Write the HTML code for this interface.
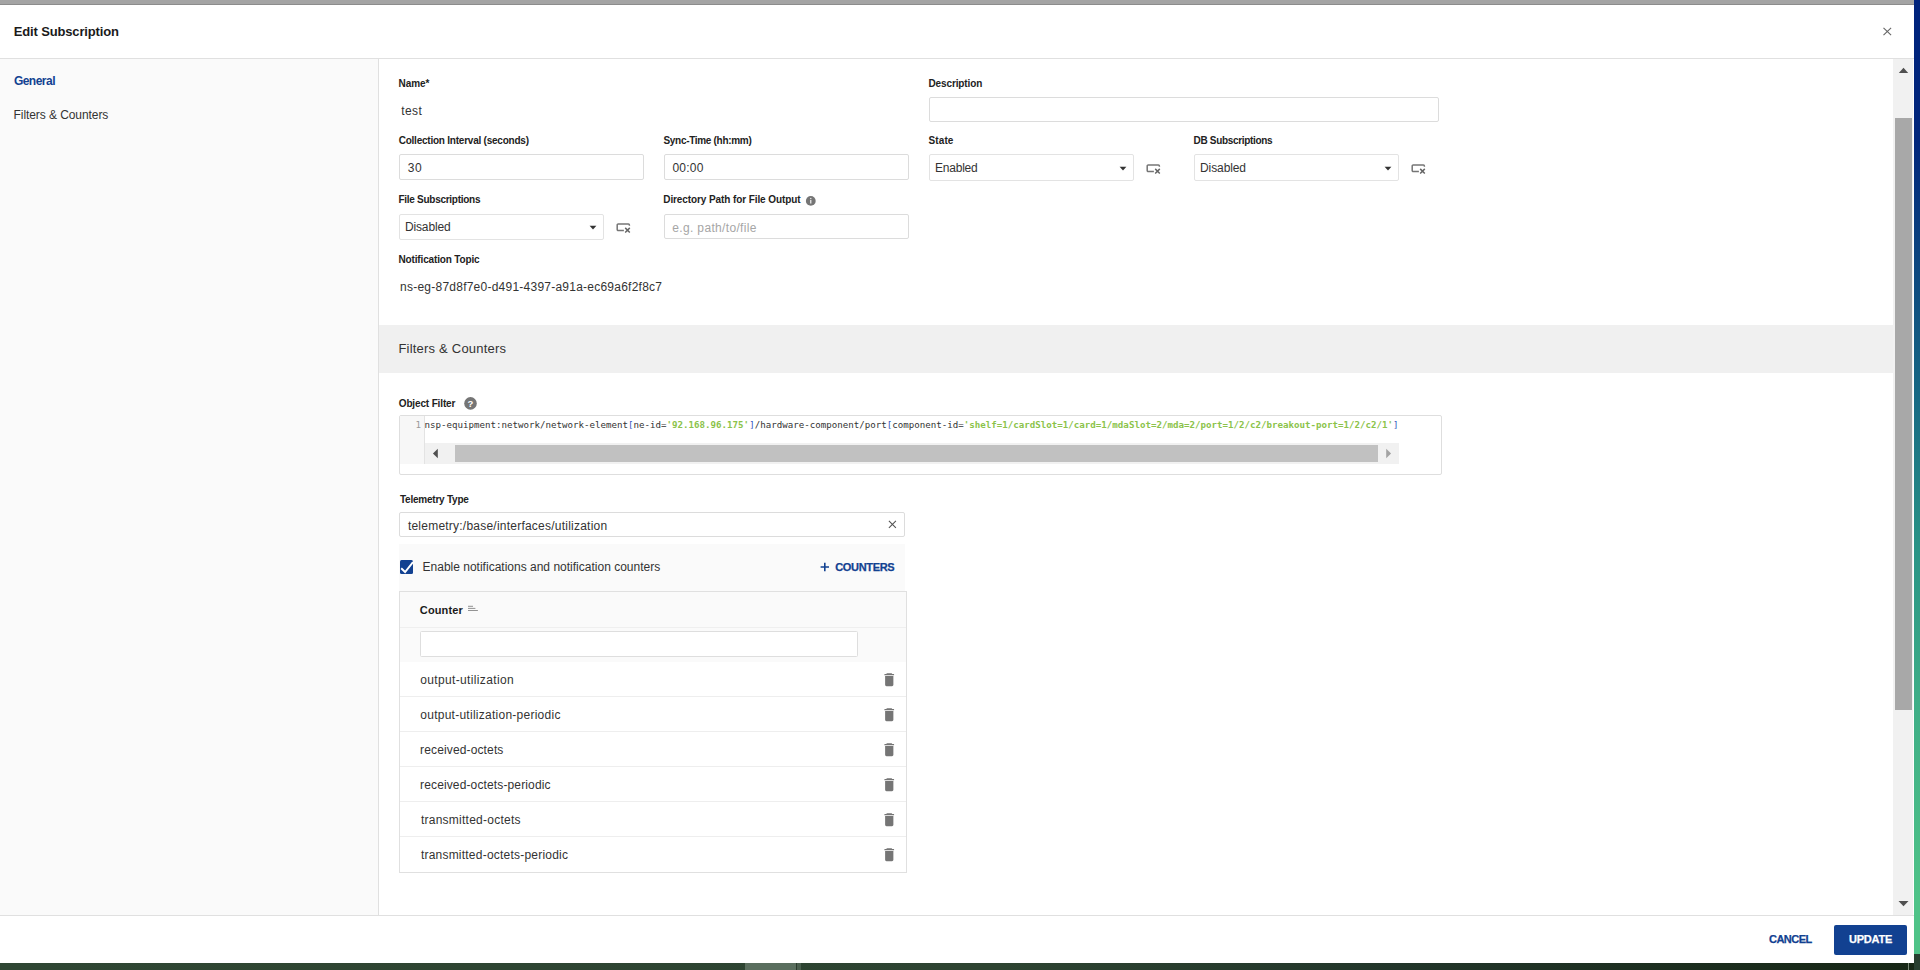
<!DOCTYPE html>
<html lang="en">
<head>
<meta charset="utf-8">
<title>Edit Subscription</title>
<style>
*{box-sizing:border-box;margin:0;padding:0}
html,body{width:1920px;height:970px;overflow:hidden}
body{position:relative;background:#2f4633;font-family:"Liberation Sans",sans-serif;color:#333;font-size:12px}
.abs{position:absolute}
.t{position:absolute;white-space:nowrap;line-height:1}
#topstrip{left:0;top:0;width:1914px;height:5px;background:#a4a4a4;border-bottom:1px solid #8c8c8c}
#rightstrip{left:1914px;top:0;width:6px;height:954px;background:linear-gradient(to bottom,#00237c 0px,#01267c 140px,#0c437f 250px,#186a84 400px,#2a9486 550px,#3fae87 700px,#4fc388 900px,#4fc388 954px)}
#rightbot{left:1914px;top:954px;width:6px;height:16px;background:#283f30}
#botstrip{left:0;top:963px;width:1914px;height:7px;background:linear-gradient(to right,#2f4633 0px,#2d4331 1000px,#22352a 1400px,#172716 1900px)}
#dialog{left:0;top:5px;width:1914px;height:958px;background:#fff}
#hline{left:0;top:58px;width:1914px;height:1px;background:#e0e0e0}
#side{left:0;top:59px;width:378px;height:856px;background:#fafafa}
#sideline{left:378px;top:59px;width:1px;height:856px;background:#e0e0e0}
#fline{left:0;top:915px;width:1914px;height:1px;background:#e0e0e0}
.lbl{font-weight:bold;font-size:11px;color:#222}
.inp{position:absolute;border:1px solid #dcdcdc;border-radius:2px;background:#fff}
.sel{border-color:#e3e3e3}
.val{font-size:12px;color:#333}
.br{color:#3355c0}
.st{color:#8bc34a;font-weight:bold}
</style>
</head>
<body>
<div class="abs" id="topstrip"></div>
<div class="abs" id="rightstrip"></div>
<div class="abs" id="botstrip"></div>
<div class="abs" id="rightbot"></div>
<div class="abs" style="left:1908px;top:963px;width:1px;height:7px;background:#7a8a78"></div>
<div class="abs" id="dialog"></div>
<div class="abs" id="hline"></div>
<div class="abs" id="side"></div>
<div class="abs" id="sideline"></div>
<div class="abs" id="fline"></div>
<!-- header -->
<div class="t" id="title" style="left:13.78px;top:25px;font-size:13px;font-weight:bold;color:#1a1a1a;letter-spacing:-0.155px">Edit Subscription</div>
<svg class="abs" id="closex" style="left:1882px;top:26px" width="11" height="11" viewBox="0 0 11 11"><path d="M1.5 1.8 L9.1 9.2 M9.1 1.8 L1.5 9.2" stroke="#666" stroke-width="1.1" fill="none"/></svg>
<!-- sidebar -->
<div class="t" id="navgen" style="left:13.88px;top:75px;font-size:12px;font-weight:bold;color:#124191;letter-spacing:-0.514px">General</div>
<div class="t" id="navfil" style="left:13.54px;top:109px;font-size:12px;color:#333;letter-spacing:-0.074px">Filters &amp; Counters</div>
<!-- main scrollbar -->
<div class="abs" id="vtrack" style="left:1893px;top:59px;width:20px;height:856px;background:#f1f1f1"></div>
<div class="abs" id="vthumb" style="left:1895px;top:118px;width:17px;height:592px;background:#a8a8a8"></div>
<svg class="abs" style="left:1898px;top:67px" width="11" height="7" viewBox="0 0 11 7"><path d="M0.8 6 L5.5 0.8 L10.2 6 Z" fill="#505050"/></svg>
<svg class="abs" style="left:1898px;top:900px" width="11" height="7" viewBox="0 0 11 7"><path d="M0.5 1 L5.5 6.3 L10.5 1 Z" fill="#505050"/></svg>
<!-- general form -->
<div class="t lbl" id="l_name" style="left:398.47px;top:79px;font-size:10px;letter-spacing:-0.022px">Name*</div>
<div class="t val" id="v_name" style="left:401.18px;top:105px;font-size:12px;letter-spacing:0.454px">test</div>
<div class="t lbl" id="l_desc" style="left:928.47px;top:79px;font-size:10px;letter-spacing:-0.121px">Description</div>
<div class="inp" id="i_desc" style="left:929px;top:97px;width:510px;height:25px"></div>

<div class="t lbl" id="l_ci" style="left:398.69px;top:136px;font-size:10px;letter-spacing:-0.228px">Collection Interval (seconds)</div>
<div class="inp" id="i_ci" style="left:399px;top:154px;width:245px;height:26px"></div>
<div class="t val" id="v_ci" style="left:407.65px;top:162px;font-size:12px;letter-spacing:0.625px">30</div>
<div class="t lbl" id="l_sync" style="left:663.47px;top:136px;font-size:10px;letter-spacing:-0.305px">Sync-Time (hh:mm)</div>
<div class="inp" id="i_sync" style="left:664px;top:154px;width:245px;height:26px"></div>
<div class="t val" id="v_sync" style="left:672.44px;top:162px;font-size:12px;letter-spacing:0.245px">00:00</div>
<div class="t lbl" id="l_state" style="left:928.62px;top:136px;font-size:10px;letter-spacing:0.084px">State</div>
<div class="inp sel" id="i_state" style="left:929px;top:154px;width:205px;height:27px"></div>
<div class="t val" id="v_state" style="left:934.91px;top:162px;font-size:12px;letter-spacing:-0.196px">Enabled</div>
<svg class="abs" style="left:1119px;top:166px" width="8" height="5" viewBox="0 0 8 5"><path d="M0.6 0.8 L7.4 0.8 L4 4.5 Z" fill="#333"/></svg>
<svg class="abs ico" style="left:1146px;top:163px" width="15" height="12" viewBox="0 0 15 12"><path d="M13.4 3.7 V2.9 a1 1 0 0 0 -1 -1 H2.2 a1 1 0 0 0 -1 1 V7.6 a1 1 0 0 0 1 1 H7.9" stroke="#757575" stroke-width="1.5" fill="none"/><path d="M9.2 5.9 L13.8 10.5 M13.8 5.9 L9.2 10.5" stroke="#666" stroke-width="1.5" fill="none"/></svg>
<div class="t lbl" id="l_db" style="left:1193.61px;top:136px;font-size:10px;letter-spacing:-0.333px">DB Subscriptions</div>
<div class="inp sel" id="i_db" style="left:1194px;top:154px;width:205px;height:27px"></div>
<div class="t val" id="v_db" style="left:1200.07px;top:162px;font-size:12px;letter-spacing:-0.105px">Disabled</div>
<svg class="abs" style="left:1384px;top:166px" width="8" height="5" viewBox="0 0 8 5"><path d="M0.6 0.8 L7.4 0.8 L4 4.5 Z" fill="#333"/></svg>
<svg class="abs ico" style="left:1411px;top:163px" width="15" height="12" viewBox="0 0 15 12"><path d="M13.4 3.7 V2.9 a1 1 0 0 0 -1 -1 H2.2 a1 1 0 0 0 -1 1 V7.6 a1 1 0 0 0 1 1 H7.9" stroke="#757575" stroke-width="1.5" fill="none"/><path d="M9.2 5.9 L13.8 10.5 M13.8 5.9 L9.2 10.5" stroke="#666" stroke-width="1.5" fill="none"/></svg>

<div class="t lbl" id="l_fs" style="left:398.47px;top:195px;font-size:10px;letter-spacing:-0.277px">File Subscriptions</div>
<div class="inp sel" id="i_fs" style="left:399px;top:214px;width:205px;height:26px"></div>
<div class="t val" id="v_fs" style="left:404.88px;top:221px;font-size:12px;letter-spacing:-0.122px">Disabled</div>
<svg class="abs" style="left:589px;top:225px" width="8" height="5" viewBox="0 0 8 5"><path d="M0.6 0.8 L7.4 0.8 L4 4.5 Z" fill="#333"/></svg>
<svg class="abs ico" style="left:616px;top:222px" width="15" height="12" viewBox="0 0 15 12"><path d="M13.4 3.7 V2.9 a1 1 0 0 0 -1 -1 H2.2 a1 1 0 0 0 -1 1 V7.6 a1 1 0 0 0 1 1 H7.9" stroke="#757575" stroke-width="1.5" fill="none"/><path d="M9.2 5.9 L13.8 10.5 M13.8 5.9 L9.2 10.5" stroke="#666" stroke-width="1.5" fill="none"/></svg>
<div class="t lbl" id="l_dir" style="left:663.26px;top:195px;font-size:10px;letter-spacing:-0.094px">Directory Path for File Output</div>
<svg class="abs" style="left:805px;top:195px" width="12" height="12" viewBox="0 0 12 12"><circle cx="5.8" cy="5.9" r="4.9" fill="#757575"/><rect x="5.25" y="4.9" width="1.1" height="3.6" fill="#fff"/><rect x="5.25" y="2.9" width="1.1" height="1.2" fill="#fff"/></svg>
<div class="inp" id="i_dir" style="left:664px;top:214px;width:245px;height:25px"></div>
<div class="t val" id="v_dir" style="left:672.36px;top:222px;color:#a6a6a6;font-size:12px;letter-spacing:0.333px">e.g. path/to/file</div>

<div class="t lbl" id="l_nt" style="left:398.47px;top:255px;font-size:10px;letter-spacing:-0.148px">Notification Topic</div>
<div class="t val" id="v_nt" style="left:400.07px;top:281px;font-size:12px;letter-spacing:0.237px">ns-eg-87d8f7e0-d491-4397-a91a-ec69a6f2f8c7</div>

<!-- section header -->
<div class="abs" id="sechdr" style="left:379px;top:325px;width:1514px;height:48px;background:#f0f0f0"></div>
<div class="t" id="sectitle" style="left:398.40px;top:342px;font-size:13px;color:#333;letter-spacing:0.211px">Filters &amp; Counters</div>
<!-- object filter -->
<div class="t lbl" id="l_of" style="left:398.77px;top:399px;font-size:10px;letter-spacing:-0.144px">Object Filter</div>
<svg class="abs" style="left:464px;top:397px" width="13" height="13" viewBox="0 0 13 13"><circle cx="6.5" cy="6.4" r="6.3" fill="#757575"/><text x="6.5" y="9.8" text-anchor="middle" font-family="Liberation Sans, sans-serif" font-weight="bold" font-size="9.5" fill="#fff">?</text></svg>
<div class="abs" id="editor" style="left:399px;top:415px;width:1043px;height:60px;border:1px solid #dedede;border-radius:2px;background:#fff"></div>
<div class="abs" id="gutter" style="left:400px;top:416px;width:25px;height:48px;background:#f7f7f7;border-right:1px solid #e3e3e3"></div>
<div class="t" id="lineno" style="left:415.5px;top:421px;font-family:'DejaVu Sans Mono','Liberation Mono',monospace;font-size:9.154px;color:#999">1</div>
<div class="t" id="code" style="left:424.4px;top:421px;font-family:'DejaVu Sans Mono','Liberation Mono',monospace;font-size:9.154px;color:#333">nsp-equipment:network/network-element<span class="br">[</span>ne-id=<span class="st">'92.168.96.175'</span><span class="br">]</span>/hardware-component/port<span class="br">[</span>component-id=<span class="st">'shelf=1/cardSlot=1/card=1/mdaSlot=2/mda=2/port=1/2/c2/breakout-port=1/2/c2/1'</span><span class="br">]</span></div>
<div class="abs" id="htrack" style="left:425px;top:443px;width:974px;height:21px;background:#f1f1f1"></div>
<div class="abs" id="hthumb" style="left:455px;top:445px;width:923px;height:17px;background:#c1c1c1"></div>
<svg class="abs" style="left:431px;top:448px" width="8" height="11" viewBox="0 0 8 11"><path d="M6.8 0.8 L1.9 5.5 L6.8 10.2 Z" fill="#505050"/></svg>
<svg class="abs" style="left:1385px;top:448px" width="8" height="11" viewBox="0 0 8 11"><path d="M1.2 0.8 L6.1 5.5 L1.2 10.2 Z" fill="#a3a3a3"/></svg>

<!-- telemetry type -->
<div class="t lbl" id="l_tt" style="left:399.91px;top:495px;font-size:10px;letter-spacing:-0.222px">Telemetry Type</div>
<div class="inp" id="i_tt" style="left:399px;top:512px;width:506px;height:25px"></div>
<div class="t val" id="v_tt" style="left:407.92px;top:520px;font-size:12px;letter-spacing:0.228px">telemetry:/base/interfaces/utilization</div>
<svg class="abs" style="left:887px;top:519px" width="11" height="11" viewBox="0 0 11 11"><path d="M1.9 1.9 L8.9 8.9 M8.9 1.9 L1.9 8.9" stroke="#555" stroke-width="1.1" fill="none"/></svg>

<!-- notifications band -->
<div class="abs" id="band" style="left:399px;top:544px;width:506px;height:48px;background:#fafafa"></div>
<div class="abs" id="cb" style="left:400px;top:560px;width:13.1px;height:14px;background:#124191;border-radius:1.5px"></div>
<svg class="abs" style="left:399px;top:559px" width="16" height="16" viewBox="0 0 16 16"><path d="M2.2 9.3 L6.1 13 L14 3.2" stroke="#fff" stroke-width="1.9" fill="none"/></svg>
<div class="t val" id="v_en" style="left:422.54px;top:561px;font-size:12px;letter-spacing:0.004px">Enable notifications and notification counters</div>
<svg class="abs" style="left:820px;top:562px" width="10" height="10" viewBox="0 0 10 10"><path d="M4.8 0.7 V9.3 M0.6 5 H9" stroke="#124191" stroke-width="1.6" fill="none"/></svg>
<div class="t" id="b_cnt" style="left:835.18px;top:562px;font-size:11px;font-weight:bold;color:#124191;letter-spacing:-0.314px;-webkit-text-stroke:0.25px">COUNTERS</div>
<!-- counters table -->
<div class="abs" id="tbl" style="left:399px;top:591px;width:508px;height:282px;border:1px solid #e0e0e0;background:#fff"></div>
<div class="abs" id="thead" style="left:400px;top:592px;width:506px;height:70px;background:#fafafa"></div>
<div class="abs" id="thline" style="left:400px;top:627px;width:506px;height:1px;background:#efefef"></div>
<div class="t" id="th_counter" style="left:419.87px;top:605px;font-size:11px;font-weight:bold;color:#1a1a1a;letter-spacing:0.112px">Counter</div>
<svg class="abs" style="left:467px;top:605px" width="12" height="7" viewBox="0 0 12 7"><path d="M1 1.3 H6 M1 3.4 H8.4 M1 5.5 H10.9" stroke="#666" stroke-width="0.7" fill="none"/></svg>
<div class="inp" id="i_filter" style="left:420px;top:631px;width:438px;height:26px;border-radius:1.5px;border-color:#dedede"></div>
<div class="t val" id="r0" style="left:420.27px;top:674px;font-size:12px;letter-spacing:0.353px">output-utilization</div>
<svg class="abs" style="left:880.9px;top:670.8px" width="16.5" height="17.33" viewBox="0 0 24 24" preserveAspectRatio="none"><path d="M6 19c0 1.1.9 2 2 2h8c1.1 0 2-.9 2-2V7H6v12zM19 4h-2.6l-1-1h-6.800l-1 1H5v2h14V4z" fill="#757575"/></svg>
<div class="abs rline" style="left:400px;top:696px;width:506px;height:1px;background:#eeeeee"></div>
<div class="t val" id="r1" style="left:420.27px;top:709px;font-size:12px;letter-spacing:0.259px">output-utilization-periodic</div>
<svg class="abs" style="left:880.9px;top:705.8px" width="16.5" height="17.33" viewBox="0 0 24 24" preserveAspectRatio="none"><path d="M6 19c0 1.1.9 2 2 2h8c1.1 0 2-.9 2-2V7H6v12zM19 4h-2.6l-1-1h-6.800l-1 1H5v2h14V4z" fill="#757575"/></svg>
<div class="abs rline" style="left:400px;top:731px;width:506px;height:1px;background:#eeeeee"></div>
<div class="t val" id="r2" style="left:420.07px;top:744px;font-size:12px;letter-spacing:0.137px">received-octets</div>
<svg class="abs" style="left:880.9px;top:740.8px" width="16.5" height="17.33" viewBox="0 0 24 24" preserveAspectRatio="none"><path d="M6 19c0 1.1.9 2 2 2h8c1.1 0 2-.9 2-2V7H6v12zM19 4h-2.6l-1-1h-6.800l-1 1H5v2h14V4z" fill="#757575"/></svg>
<div class="abs rline" style="left:400px;top:766px;width:506px;height:1px;background:#eeeeee"></div>
<div class="t val" id="r3" style="left:420.07px;top:779px;font-size:12px;letter-spacing:0.132px">received-octets-periodic</div>
<svg class="abs" style="left:880.9px;top:775.8px" width="16.5" height="17.33" viewBox="0 0 24 24" preserveAspectRatio="none"><path d="M6 19c0 1.1.9 2 2 2h8c1.1 0 2-.9 2-2V7H6v12zM19 4h-2.6l-1-1h-6.800l-1 1H5v2h14V4z" fill="#757575"/></svg>
<div class="abs rline" style="left:400px;top:801px;width:506px;height:1px;background:#eeeeee"></div>
<div class="t val" id="r4" style="left:420.88px;top:814px;font-size:12px;letter-spacing:0.253px">transmitted-octets</div>
<svg class="abs" style="left:880.9px;top:810.8px" width="16.5" height="17.33" viewBox="0 0 24 24" preserveAspectRatio="none"><path d="M6 19c0 1.1.9 2 2 2h8c1.1 0 2-.9 2-2V7H6v12zM19 4h-2.6l-1-1h-6.800l-1 1H5v2h14V4z" fill="#757575"/></svg>
<div class="abs rline" style="left:400px;top:836px;width:506px;height:1px;background:#eeeeee"></div>
<div class="t val" id="r5" style="left:420.88px;top:849px;font-size:12px;letter-spacing:0.221px">transmitted-octets-periodic</div>
<svg class="abs" style="left:880.9px;top:845.8px" width="16.5" height="17.33" viewBox="0 0 24 24" preserveAspectRatio="none"><path d="M6 19c0 1.1.9 2 2 2h8c1.1 0 2-.9 2-2V7H6v12zM19 4h-2.6l-1-1h-6.800l-1 1H5v2h14V4z" fill="#757575"/></svg>
<!-- footer -->
<div class="t" id="b_cancel" style="left:1769.06px;top:934px;font-size:11px;font-weight:bold;color:#124191;letter-spacing:-0.535px;-webkit-text-stroke:0.25px">CANCEL</div>
<div class="abs" id="b_update" style="left:1834px;top:925px;width:73px;height:30px;background:#124191;border-radius:2px"></div>
<div class="t" id="t_update" style="left:1849.04px;top:934px;font-size:11px;font-weight:bold;color:#fff;letter-spacing:-0.236px;-webkit-text-stroke:0.25px">UPDATE</div>
<!-- bottom strip details -->
<div class="abs" style="left:745px;top:963px;width:51px;height:7px;background:#5a6e5e"></div>
<div class="abs" style="left:796px;top:963px;width:1px;height:7px;background:#2a3a2d"></div>
<div class="abs" style="left:797px;top:963px;width:4px;height:7px;background:#4a5e4e"></div>
<!--CONTENT-->
</body>
</html>
